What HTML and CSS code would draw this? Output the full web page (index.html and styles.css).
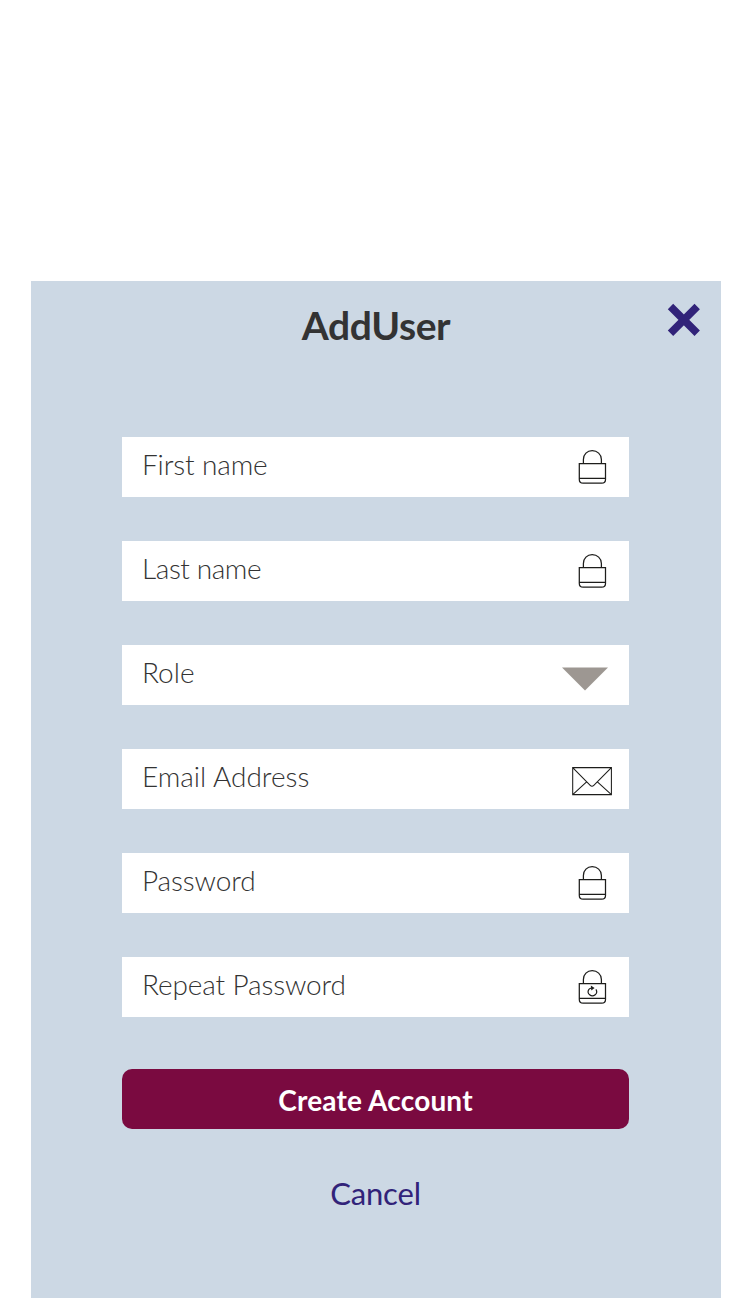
FILE: index.html
```html
<!DOCTYPE html>
<html lang="en">
<head>
<meta charset="utf-8">
<title>Add User</title>
<link rel="stylesheet" href="styles.css">
</head>
<body>
<svg width="0" height="0" class="defs">
  <symbol id="lock" viewBox="0 0 30 36">
    <path d="M6.4 14.5V10.5C6.4 5.2 10.2 1.7 15.2 1.7S24.4 5.2 24.4 10.5V14.5M2.3 14.6H28.5V30.4C28.5 32.8 27.1 34.1 24.7 34.1H6.1C3.7 34.1 2.3 32.8 2.3 30.4ZM2.3 29.4H28.5" fill="none" stroke="#1d1d1b" stroke-width="1.25"/>
  </symbol>
</svg>
<main class="panel">
  <header class="head">
    <h1 class="title">AddUser</h1>
    <svg class="close" width="34" height="34" viewBox="0 0 34 34"><path d="M3.5 3.5L30.2 30.2M30.2 3.5L3.5 30.2" stroke="#312379" stroke-width="7.6"/></svg>
  </header>
  <form class="form">
    <div class="field"><span class="label first">First name</span><svg class="lock" width="30" height="36"><use href="#lock"/></svg></div>
    <div class="field"><span class="label last">Last name</span><svg class="lock" width="30" height="36"><use href="#lock"/></svg></div>
    <div class="field"><span class="label role">Role</span><svg class="caret" width="46" height="24" viewBox="0 0 46 24"><path d="M0 .5H46L23 23.5Z" fill="#9d9792"/></svg></div>
    <div class="field"><span class="label email">Email Address</span><svg class="mail" width="40" height="29" viewBox="0 0 40 29"><path d="M.7 .6H39.4V27.6H.7ZM.7 .6L18.2 18.4Q20 20.2 21.8 18.4L39.4 .6M.7 27.6L14.6 14.8M39.4 27.6L25.4 14.8" fill="none" stroke="#1d1d1b" stroke-width="1.05"/></svg></div>
    <div class="field"><span class="label pass">Password</span><svg class="lock" width="30" height="36"><use href="#lock"/></svg></div>
    <div class="field"><span class="label repeat">Repeat Password</span><svg class="lock" width="30" height="36"><use href="#lock"/><path d="M18.9 20.3A4.2 4.2 0 1 1 11.9 20.3Q12.9 19.3 14.5 19" fill="none" stroke="#1d1d1b" stroke-width="1.2"/><path d="M13.8 16.6L17.6 18.9L14.3 21.4Z" fill="#1d1d1b"/></svg></div>
    <button class="submit" type="button">Create Account</button>
    <a class="cancel">Cancel</a>
  </form>
</main>
</body>
</html>
```
FILE: styles.css
```css
* { box-sizing: border-box; }
body { margin: 0; background: #fff; font-family: Lato, "Liberation Sans", sans-serif; }
.defs { display: block; }
.panel { width: 690px; height: 1017px; margin: 280.5px 0 0 31px; background: #ccd8e4; }
.head { display: grid; grid-template-columns: 1fr auto 1fr; height: 156.5px; padding-right: 20px; align-items: start; }
.title { grid-column: 2; margin: 20.5px 0 0 20px; font-size: 39px; line-height: 48px; font-weight: 700; letter-spacing: -.4px; color: #333; }
.close { justify-self: end; margin-top: 22.5px; }
.form { display: flex; flex-direction: column; width: 507px; margin-left: 91px; }
.field { display: flex; justify-content: space-between; height: 60px; margin-bottom: 44px; padding: 0 17px 0 20px; background: #fff; }
.label { font-size: 28px; line-height: 34px; margin-top: 10px; font-weight: 300; color: #333; white-space: nowrap; }
.first, .repeat, .pass { letter-spacing: -.13px; }
.last { letter-spacing: -.42px; }
.lock { margin: 12px 5px 0 0; }
.caret { margin: 22px 4px 0 0; }
.mail { margin-top: 18px; }
.submit { height: 60px; margin-top: 8.4px; border: 0; border-radius: 10px; padding: 2px 0 0; background: #7a0a40; color: #fff; font: 700 28px/58px Lato, sans-serif; letter-spacing: .17px; }
.cancel { align-self: center; margin-top: 45px; font-size: 31px; line-height: 38px; letter-spacing: -.15px; color: #312379; }
```
